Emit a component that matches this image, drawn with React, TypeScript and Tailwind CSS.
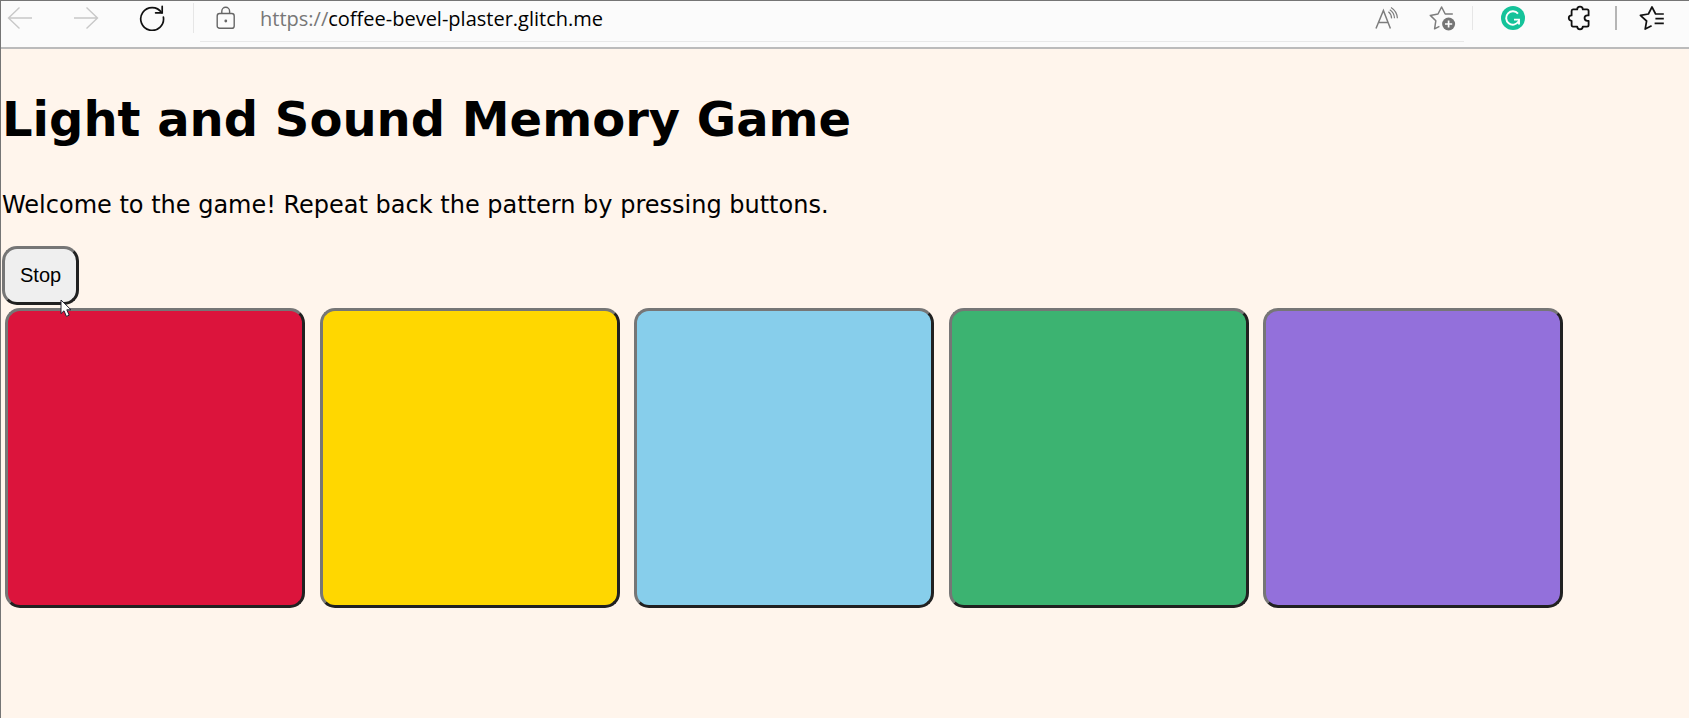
import type { ReactNode } from "react";

const PADS = [
  { name: "Red", color: "bg-[#dc143c]" },
  { name: "Yellow", color: "bg-[#ffd700]" },
  { name: "Blue", color: "bg-[#87ceeb]" },
  { name: "Green", color: "bg-[#3cb371]" },
  { name: "Purple", color: "bg-[#9370db]" },
];

const BEVEL =
  "rounded-[15px] border-[3px] border-t-[#767676] border-l-[#767676] border-r-[#212121] border-b-[#212121]";

function ToolButton({ label, className, children }: { label: string; className: string; children: ReactNode }) {
  return (
    <button type="button" aria-label={label} className={`flex shrink-0 items-center justify-center ${className}`}>
      {children}
    </button>
  );
}

function ArrowIcon({ flip = false }: { flip?: boolean }) {
  return (
    <svg width="26" height="24" viewBox="0 0 26 24" fill="none" stroke="#c8c8c8" strokeWidth="1.4">
      <path d={flip ? "M1 12H24.5M13.5 1.5L24.5 12L13.5 22.5" : "M25 12H1.5M12.5 1.5L1.5 12L12.5 22.5"} />
    </svg>
  );
}

function ReloadIcon() {
  return (
    <svg width="26" height="26" viewBox="0 0 26 26" fill="none" stroke="#111" strokeWidth="1.7" strokeLinecap="round">
      <path d="M24.4 12.2A11.4 11.4 0 1 1 22.6 7.6" />
      <path d="M23.2 1.4V7.8H16.6" />
    </svg>
  );
}

function LockIcon() {
  return (
    <svg width="20" height="24" viewBox="0 0 20 24" fill="none" stroke="#666" strokeWidth="1.4">
      <rect x="1.2" y="7.5" width="17" height="14.8" rx="2.4" />
      <path d="M5.8 7.5V5.2A3.9 3.9 0 0 1 13.6 5.2V7.5" />
      <circle cx="9.8" cy="15" r="1.4" fill="#666" stroke="none" />
    </svg>
  );
}

function ReadAloudIcon() {
  return (
    <svg width="24" height="24" viewBox="0 0 24 24" fill="none" stroke="#7d7d7d" strokeWidth="1.5">
      <path d="M1 22.5L8.4 4.5L15.4 22.5M3.6 16.4H12.8" />
      <path d="M13.4 5.8Q16.4 8 16.6 12.4M16 1.6Q22 5.4 22.4 12.2M14.8 3.8Q19.2 6.6 19.5 12.2" strokeWidth="1.2" />
    </svg>
  );
}

function AddFavoriteIcon() {
  return (
    <svg width="27" height="26" viewBox="0 0 27 26" fill="none">
      <path
        d="M10.4 21.4L5.6 23.8L6.8 15.8L1.3 10.4L9 9L12.6 2L16.2 9H23.8"
        stroke="#7d7d7d"
        strokeWidth="1.5"
        strokeLinejoin="round"
      />
      <circle cx="19.6" cy="19" r="6.5" fill="#757575" />
      <path d="M19.6 15.4V22.6M16 19H23.2" stroke="#fff" strokeWidth="1.7" />
    </svg>
  );
}

function GrammarIcon() {
  return (
    <svg width="24" height="24" viewBox="0 0 24 24" fill="none">
      <circle cx="12" cy="12" r="12" fill="#15c39a" />
      <path d="M17 7.7A6.7 6.7 0 1 0 17.5 15.6" stroke="#fff" strokeWidth="1.9" />
      <path d="M13 13.6H18V18.4" stroke="#fff" strokeWidth="1.9" />
    </svg>
  );
}

function PuzzleIcon() {
  return (
    <svg width="24" height="26" viewBox="0 0 24 26" fill="none" stroke="#111" strokeWidth="1.8" strokeLinejoin="round">
      <path d="M6 4.4H10.2C10.2 0.8 15.8 0.8 15.8 4.4H20Q21.6 4.4 21.6 6V10.4H20.4C16.6 10.4 16.6 15.8 20.4 15.8H21.6V20Q21.6 21.6 20 21.6H15.8C15.8 25.2 10.2 25.2 10.2 21.6H6Q4.6 21.6 4.6 20V15.8C0.8 15.8 0.8 10.4 4.6 10.4V6Q4.6 4.4 6 4.4Z" />
    </svg>
  );
}

function FavoritesIcon() {
  return (
    <svg width="26" height="26" viewBox="0 0 26 26" fill="none" stroke="#111" strokeWidth="1.7" strokeLinejoin="round">
      <path d="M12.6 20.8L6.2 24L7.6 16L1.4 10.4L9.4 9L13 2L16.6 9H24.8" />
      <path d="M16.4 13.6H24.8M15.6 18.4H24.8" />
    </svg>
  );
}

function Cursor() {
  return (
    <svg width="13" height="19" viewBox="0 0 13 19" className="absolute top-[53px] left-[58px]">
      <path d="M1 1V14.6L4 11.8L6.4 17.4L9.2 16.2L6.8 10.8H11Z" fill="#fff" stroke="#223" />
    </svg>
  );
}

export default function App() {
  return (
    <div className="flex min-h-screen flex-col border-t border-l border-[#757575] bg-[#fff5ec] text-black">
      <header className="flex h-12 items-stretch border-b-2 border-[#bbb] bg-[#fbfbfb]">
        <nav className="flex h-[34px] items-center pl-1.5" aria-label="Browser">
          <ToolButton label="Back" className="w-[26px]">
            <ArrowIcon />
          </ToolButton>
          <ToolButton label="Forward" className="ml-10 w-[26px]">
            <ArrowIcon flip />
          </ToolButton>
          <ToolButton label="Reload" className="ml-10 w-[26px]">
            <ReloadIcon />
          </ToolButton>
          <span className="ml-7 h-[30px] w-px bg-[#e6e6e6]" />
        </nav>
        <div className="ml-1.5 flex h-[41px] min-w-0 flex-1 items-start border-b border-[#e8e8e8]">
          <div className="flex h-[34px] min-w-0 flex-1 items-center pl-4">
            <LockIcon />
            <a
              href="https://coffee-bevel-plaster.glitch.me"
              className="ml-6 truncate pt-0.5 font-['Open_Sans',sans-serif] text-[20px] leading-[34px] text-[#777]"
            >
              https://<span className="text-black">coffee-bevel-plaster.glitch.me</span>
            </a>
            <div className="ml-auto flex items-center">
              <ToolButton label="Read aloud" className="w-6">
                <ReadAloudIcon />
              </ToolButton>
              <ToolButton label="Add to favorites" className="mr-2 ml-[30px] w-[27px]">
                <AddFavoriteIcon />
              </ToolButton>
            </div>
          </div>
        </div>
        <div className="flex h-[34px] items-center pr-6">
          <span className="ml-2 h-6 w-px bg-[#e6e6e6]" />
          <ToolButton label="Grammar checker" className="ml-7 w-6">
            <GrammarIcon />
          </ToolButton>
          <ToolButton label="Extensions" className="ml-[42px] w-6">
            <PuzzleIcon />
          </ToolButton>
          <span className="ml-6 h-6 w-0.5 bg-[#b5b5b5]" />
          <ToolButton label="Favorites" className="ml-[22px] w-[26px]">
            <FavoritesIcon />
          </ToolButton>
        </div>
      </header>

      <main className="flex flex-col items-start pl-px font-['DejaVu_Sans',Verdana,sans-serif]">
        <h1 className="mt-10 text-[48px] leading-[60px] font-bold">Light and Sound Memory Game</h1>
        <p className="mt-10 text-[24px] leading-[32px]">
          Welcome to the game! Repeat back the pattern by pressing buttons.
        </p>
        <div className="relative mt-[25px]">
          <button
            type="button"
            className={`${BEVEL} bg-[#efefef] px-[15px] py-[15px] font-['Liberation_Sans',Arial,sans-serif] text-[20px] leading-[23px]`}
          >
            Stop
          </button>
          <Cursor />
        </div>
        <div className="mt-[3px] flex w-full max-w-[1561px] flex-wrap justify-between gap-y-[14px] pl-[3px]">
          {PADS.map((pad) => (
            <button key={pad.name} type="button" aria-label={pad.name} className={`${BEVEL} ${pad.color} size-[300px]`} />
          ))}
        </div>
      </main>
    </div>
  );
}
